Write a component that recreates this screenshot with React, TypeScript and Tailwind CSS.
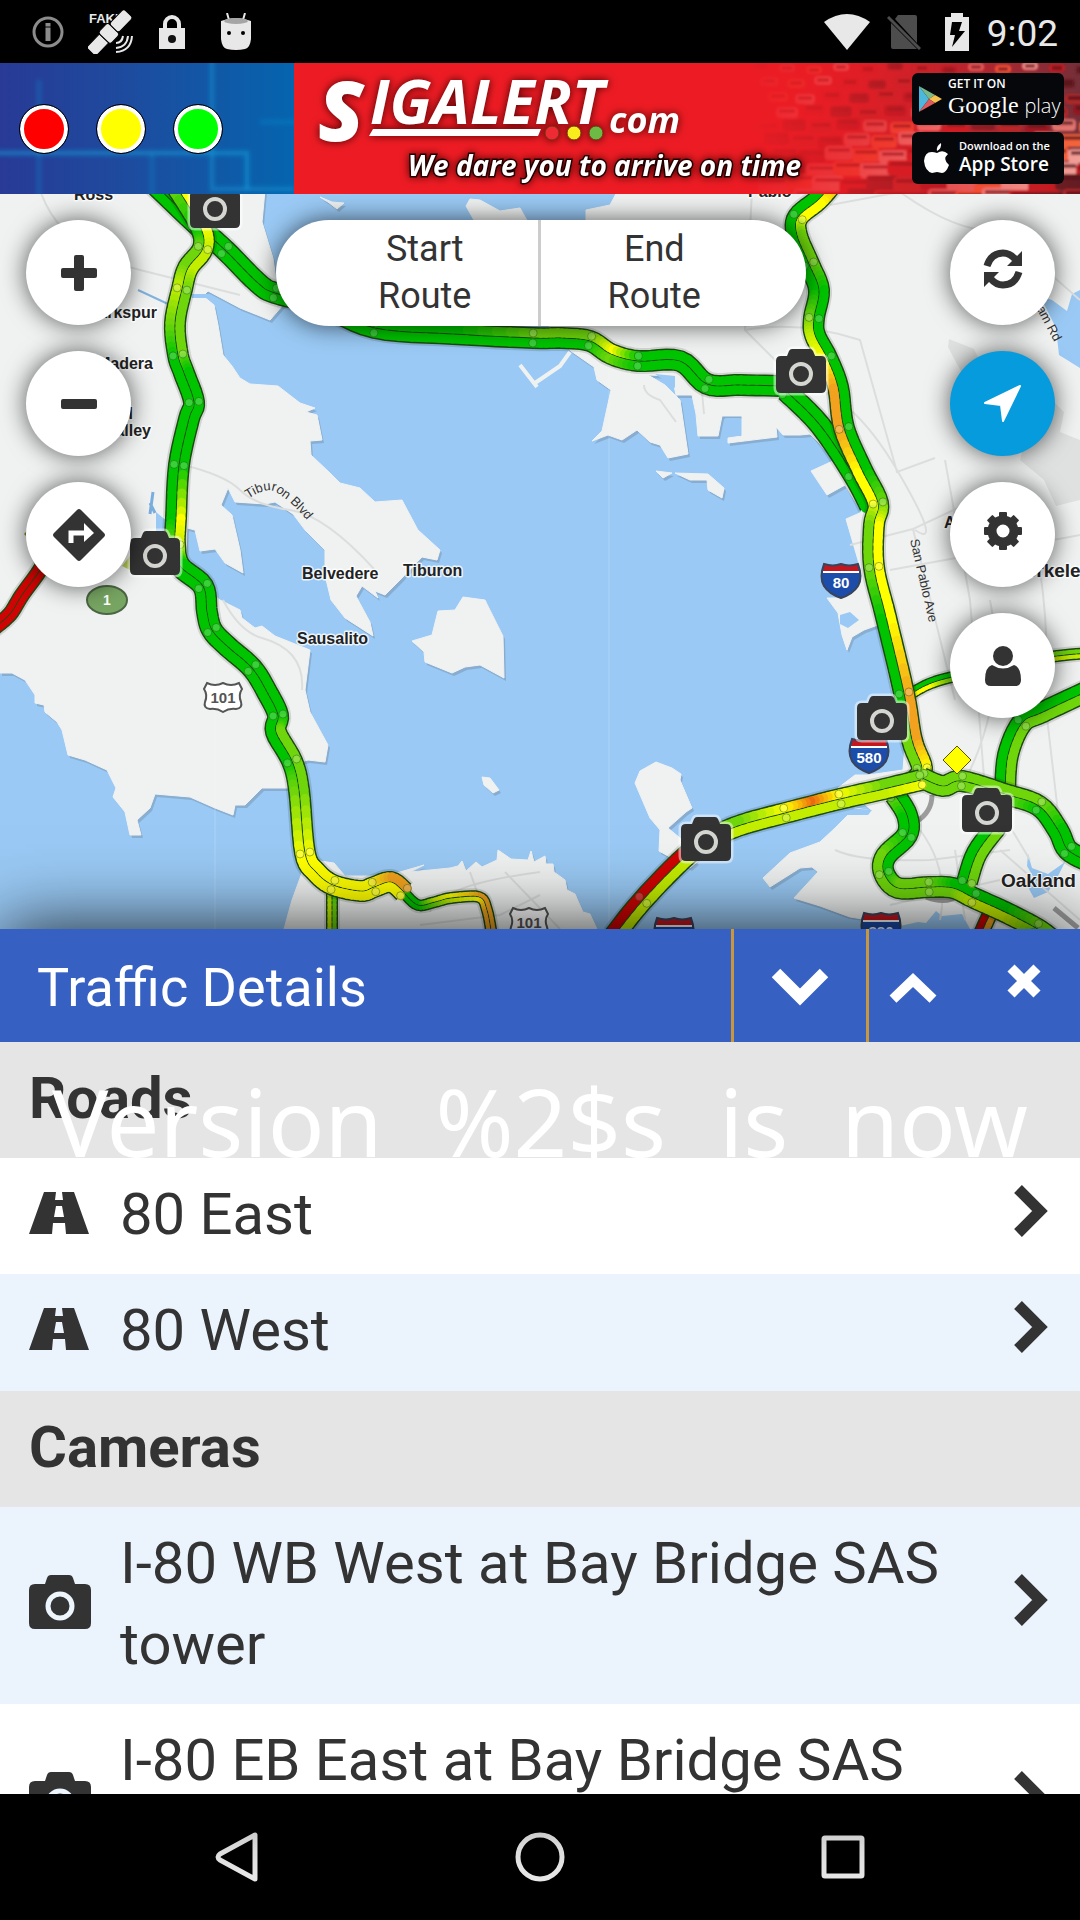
import React from "react";

type Pt = [number, number];
/* x, y, colour of the lane on the right of travel, colour of the lane on the left */
type RoadPt = [number, number, string, string];

const G = "#00c400";
const L = "#6fd60c";
const H = "#c4ee00";
const Y = "#ffff00";
const O = "#f2a21e";
const D = "#ec6a10";
const R = "#cf0404";

const hex = (c: string) => [1, 3, 5].map((i) => parseInt(c.slice(i, i + 2), 16));
const mix = (a: string, b: string, t: number) => {
  const p = hex(a);
  const q = hex(b);
  return `rgb(${p.map((v, i) => Math.round(v + (q[i] - v) * t)).join(",")})`;
};

const STEPS = 6;

function sample(points: RoadPt[]) {
  const at = (i: number) => points[Math.max(0, Math.min(points.length - 1, i))];
  const out: { x: number; y: number; a: string; b: string; node: boolean }[] = [];
  for (let i = 0; i < points.length - 1; i++) {
    const [p0, p1, p2, p3] = [at(i - 1), at(i), at(i + 1), at(i + 2)];
    for (let s = 0; s < STEPS; s++) {
      const t = s / STEPS;
      const f = (k: 0 | 1) =>
        0.5 *
        (2 * p1[k] +
          (p2[k] - p0[k]) * t +
          (2 * p0[k] - 5 * p1[k] + 4 * p2[k] - p3[k]) * t * t +
          (3 * p1[k] - p0[k] - 3 * p2[k] + p3[k]) * t * t * t);
      out.push({ x: f(0), y: f(1), a: mix(p1[2], p2[2], t), b: mix(p1[3], p2[3], t), node: s === 0 });
    }
  }
  const e = points[points.length - 1];
  out.push({ x: e[0], y: e[1], a: mix(e[2], e[2], 0), b: mix(e[3], e[3], 0), node: true });
  return out;
}

function Road({ points, w = 10 }: { points: RoadPt[]; w?: number }) {
  const s = sample(points);
  const lane = (side: number) =>
    s.map((p, i) => {
      const q = s[Math.min(i + 1, s.length - 1)];
      const o = s[Math.max(i - 1, 0)];
      const dx = q.x - o.x;
      const dy = q.y - o.y;
      const len = Math.hypot(dx, dy) || 1;
      return [p.x - (dy / len) * side * (w / 2), p.y + (dx / len) * side * (w / 2)] as Pt;
    });
  const lanes = [lane(1), lane(-1)];
  const join = (l: Pt[]) => l.map((p) => p.map((v) => v.toFixed(1)).join(",")).join(" ");
  return (
    <g fill="none" strokeLinejoin="round">
      <polyline points={join(s.map((p) => [p.x, p.y] as Pt))} stroke="#000" strokeOpacity="0.12" strokeWidth={w * 2 + 6} />
      {lanes.map((l, k) => (
        <polyline key={k} points={join(l)} stroke="#1c4a10" strokeWidth={w + 2} />
      ))}
      {lanes.map((l, k) =>
        l.slice(0, -1).map((p, i) => (
          <line
            key={`${k}-${i}`}
            x1={p[0]}
            y1={p[1]}
            x2={l[i + 1][0]}
            y2={l[i + 1][1]}
            stroke={k === 0 ? s[i].a : s[i].b}
            strokeWidth={w - 1}
            strokeLinecap="round"
          />
        ))
      )}
      {w > 7 &&
        lanes.map((l, k) =>
          l.map((p, i) =>
            s[i].node && i % (STEPS * 2) === 0 ? (
              <circle key={`${k}c${i}`} cx={p[0]} cy={p[1]} r="4" fill="#fff" fillOpacity="0.22" stroke="#1c4a10" strokeOpacity="0.4" />
            ) : null
          )
        )}
    </g>
  );
}

const roads: { w?: number; points: RoadPt[] }[] = [
  { w: 5, points: [[332, 880, L, G], [332, 905, H, L], [332, 936, H, L]] },
  { w: 5, points: [[404, 893, G, G], [418, 905, G, G], [435, 902, L, H], [451, 898, H, Y], [479, 897, Y, O], [487, 910, O, O], [492, 936, O, O]] },
  { w: 5, points: [[912, 693, Y, G], [929, 684, Y, G], [952, 677, L, G], [1010, 664, L, L], [1057, 656, H, L], [1090, 653, H, L]] },
  { w: 7, points: [[52, 548, R, R], [40, 570, R, R], [22, 595, R, R], [10, 614, R, R], [-6, 628, R, R]] },
  { w: 7, points: [[994, 905, R, O], [978, 940, R, O]] },
  {
    points: [[150, 180, G, G], [195, 223, G, G], [225, 250, G, G], [258, 283, G, G], [275, 293, G, G], [320, 305, G, G], [375, 328, G, G], [453, 334, G, G], [533, 338, G, L], [562, 338, G, L], [590, 341, G, L], [611, 354, L, Y], [638, 361, G, G], [680, 361, G, G], [707, 384, G, G], [741, 385, G, G], [785, 386, G, G]],
  },
  { points: [[786, 391, G, G], [820, 425, G, G], [853, 474, G, G], [870, 506, G, G]] },
  {
    points: [[176, 186, L, Y], [200, 226, G, Y], [203, 248, L, H], [188, 268, L, H], [182, 289, H, L], [175, 323, L, L], [178, 355, G, L], [184, 373, G, G], [194, 402, G, G], [189, 419, G, G], [179, 465, G, G], [176, 518, G, Y], [175, 545, L, H], [180, 566, G, G], [203, 586, G, G], [207, 612, G, G], [212, 630, G, G], [227, 646, G, G], [252, 668, G, G], [267, 692, G, G], [278, 715, G, G], [276, 732, G, L], [292, 761, G, L], [299, 790, L, L], [305, 853, Y, Y], [316, 872, Y, Y], [333, 885, Y, Y], [361, 891, Y, Y], [374, 887, Y, Y], [391, 882, Y, O], [404, 892, Y, O]],
  },
  {
    points: [[832, 184, G, O], [818, 200, G, Y], [798, 217, G, Y], [797, 235, G, L], [809, 264, G, L], [819, 290, G, G], [814, 318, L, G], [815, 335, H, G], [827, 358, Y, G], [838, 387, O, G], [844, 428, O, G], [862, 470, Y, G], [878, 503, Y, L], [874, 525, L, Y], [874, 567, L, Y], [886, 617, G, Y], [904, 693, G, O], [912, 740, L, O], [922, 768, L, Y], [915, 781, L, Y]],
  },
  { points: [[895, 795, L, G], [907, 815, G, G], [907, 835, G, G], [886, 856, L, G], [884, 873, L, G], [898, 888, L, L], [929, 887, L, L], [953, 888, L, G], [974, 898, H, G], [1005, 912, H, G], [1036, 928, L, L], [1050, 938, L, L]] },
  { points: [[997, 826, G, L], [977, 853, G, L], [967, 882, G, L]] },
  { points: [[1005, 793, L, G], [1008, 755, L, G], [1022, 723, L, G], [1043, 712, L, G], [1090, 690, L, G]] },
  { points: [[922, 778, L, L], [943, 786, L, L], [962, 781, L, L], [1005, 794, L, L], [1039, 806, G, L], [1058, 830, G, G], [1068, 850, G, G], [1090, 862, G, G]] },
  { points: [[921, 780, L, Y], [884, 789, L, H], [840, 799, Y, H], [812, 806, D, H], [785, 813, Y, H], [741, 825, L, H], [712, 838, L, H], [685, 857, R, H], [643, 900, R, H], [614, 936, R, H]] },
];

const land = [
  "0,190 265,190 262,222 273,258 276,280 290,300 283,305 270,320 240,308 208,291 203,296 214,305 218,325 223,355 232,366 240,378 250,384 278,386 300,403 315,408 306,412 317,415 322,440 310,441 311,455 330,473 340,483 360,488 375,502 402,500 410,515 418,530 440,550 437,560 422,557 400,580 385,595 375,591 378,598 362,586 356,596 370,622 373,636 345,618 331,600 325,575 325,550 305,530 293,514 275,502 265,504 235,502 228,488 221,505 232,515 240,550 243,573 225,563 215,549 200,551 195,530 187,528 186,556 200,585 220,600 240,610 242,618 255,628 262,626 275,636 310,650 305,690 310,712 328,745 325,762 308,760 290,765 288,788 262,788 245,805 235,805 233,815 215,808 190,797 155,794 150,808 137,820 141,835 130,835 125,812 113,797 116,788 107,770 85,760 68,755 62,730 57,722 45,712 44,705 35,703 35,695 25,680 12,673 0,673",
  "412,641 432,635 438,611 455,610 463,597 485,600 503,636 504,678 480,665 465,667 452,673 425,662 424,652",
  "482,777 490,778 499,790 493,793 484,785",
  "284,929 292,900 303,870 320,861 334,863 345,876 380,876 400,872 424,865 410,872 450,868 458,866 462,861 466,871 476,862 482,867 497,860 498,850 511,859 528,860 531,851 534,862 545,856 546,864 553,864 554,872 565,880 567,890 575,894 583,912 590,914 597,929",
  "635,783 640,771 656,762 672,768 681,774 680,780 692,808 686,812 668,828 680,838 697,862 690,868 659,851 660,830 650,818",
  "618,190 610,205 586,210 586,232 572,256 560,300 548,325 571,351 594,367 597,380 611,390 602,431 592,441 608,435 622,440 637,430 650,442 660,445 668,458 688,454 680,400 665,385 648,375 672,376 676,395 692,395 696,414 698,436 718,436 722,416 742,416 742,436 728,438 728,443 777,437 776,427 783,435 800,435 810,434 819,443 825,450 835,460 811,471 827,495 845,485 862,512 846,519 858,560 862,580 838,598 827,598 838,613 842,635 847,650 852,637 864,630 878,625 890,680 905,745 903,770 868,775 855,775 838,788 860,800 872,811 855,808 835,828 820,842 790,853 763,878 770,887 800,868 812,867 818,872 794,898 820,906 850,917 900,925 905,929 1080,929 1080,190",
  "675,473 708,474 724,488 722,498 708,490 707,480 690,480",
  "656,471 672,473 663,478",
  "466,206 470,199 480,200 500,211 520,208 528,222 475,222",
  "320,197 332,202 344,203 337,209 328,202",
];

const lakes = [
  "1080,290 1072,294 1067,311 1052,300 1040,296 1056,328 1059,355 1080,368",
  "1028,854 1032,868 1048,874 1065,862 1058,876 1048,892 1034,898 1029,889 1034,878 1027,866",
  "793,908 850,919 900,926 918,922 926,923 936,911 942,916 962,914 970,929 793,929",
  "840,615 850,612 859,620 848,628 840,624",
  "837,812 850,808 872,810 868,815 845,815",
];

const streets =
  "M40 190 Q60 250 140 270 T240 295 M183 465 Q225 475 240 490 T290 510 T375 570 M223 600 Q240 632 262 638 Q305 650 302 690 M752 190 L745 330 L800 385 Q850 390 897 470 T915 530 M850 545 L913 529 L975 500 M913 529 L955 700 M830 205 L900 192 Q960 235 1000 230 L1080 300 M745 330 Q800 320 860 340 L897 472 L935 458 M945 460 L970 600 L985 790 M890 570 L1000 550 L1080 535 M960 790 Q1010 700 990 600 M1040 570 Q1050 640 1045 700 L1060 830 M644 385 Q644 395 660 400 L676 422 M700 370 L704 414 M835 850 Q860 862 930 860 L1010 850 M920 830 Q950 870 940 920 M1000 850 L1080 920 M955 850 L965 920 M1012 830 L1030 860 M430 912 Q440 885 540 872 M470 872 L480 900 M505 872 L560 929 M540 895 L500 915 L420 925 M890 905 L1000 880";

function Camera({ x, y }: { x: number; y: number }) {
  return (
    <g transform={`translate(${x} ${y})`}>
      <path d="M-20 -15 h6 l2 -5 q1 -2 3 -2 h18 q2 0 3 2 l2 5 h6 q5 0 5 5 v27 q0 5 -5 5 h-40 q-5 0 -5 -5 v-27 q0 -5 5 -5z" fill="#333" stroke="#fff" strokeOpacity="0.5" strokeWidth="5" paintOrder="stroke" />
      <circle cx="0" cy="3" r="10" fill="none" stroke="#d3d6d1" strokeWidth="4" />
    </g>
  );
}

function Interstate({ x, y, n }: { x: number; y: number; n: string }) {
  return (
    <g transform={`translate(${x} ${y})`}>
      <path d="M-17 -16 Q-8 -13 0 -16 Q8 -13 17 -16 Q22 -3 17 6 Q12 14 0 18 Q-12 14 -17 6 Q-22 -3 -17 -16z" fill="#1c4dab" stroke="#3a4357" strokeWidth="2" />
      <path d="M-16 -15 Q-8 -12 0 -15 Q8 -12 16 -15 L18 -8 H-18z" fill="#c4161c" />
      <path d="M-18 -8 H18" stroke="#fff" strokeWidth="2" />
      <text x="0" y="8" textAnchor="middle" fontSize="15" fontWeight="700" fill="#fff">{n}</text>
    </g>
  );
}

function UsRoute({ x, y }: { x: number; y: number }) {
  return (
    <g transform={`translate(${x} ${y})`}>
      <path d="M-16 -14 Q-8 -10 0 -14 Q8 -10 16 -14 L19 -8 Q15 -2 18 5 Q20 11 13 12 Q6 11 0 15 Q-6 11 -13 12 Q-20 11 -18 5 Q-15 -2 -19 -8z" fill="#fff" stroke="#555" strokeWidth="2" />
      <text x="0" y="6" textAnchor="middle" fontSize="15" fontWeight="700" fill="#555">101</text>
    </g>
  );
}

function TrafficMap() {
  return (
    <svg viewBox="0 194 1080 735" preserveAspectRatio="xMidYMid slice" className="block h-full w-full font-['Liberation_Sans',sans-serif]" role="img" aria-label="Traffic map">
      <rect x="0" y="194" width="1080" height="735" fill="#99c9f4" />
      <g fill="#7d9cba" transform="translate(2 3)" opacity="0.6">
        {land.map((p) => <polygon key={p} points={p} />)}
      </g>
      <g fill="#f0f2f2" stroke="#f0f2f2" strokeLinejoin="round">
        {land.map((p) => <polygon key={p} points={p} />)}
        <path d="M520 365 L537 387 M535 383 L560 366 L570 352" fill="none" strokeWidth="4" />
      </g>
      <g fill="#99c9f4">
        {lakes.map((p) => <polygon key={p} points={p} />)}
        <path d="M655 374 L675 388 V376z" />
        <path d="M725 418 h16 v18 h-14z" />
      </g>
      <path d="M150 514 l3 -22 M150 503 l5 10" stroke="#7aaede" strokeWidth="3" fill="none" />
      <path d="M156 540 v-28 l12 10 v24z" fill="#99c9f4" />
      <path d="M138 290 L168 304" stroke="#82b2de" strokeWidth="2" />
      <path d="M192 296 h18" stroke="#99c9f4" strokeWidth="4" />
      <path d="M949 339 l25 10 l12 24 l-18 10 q-12 -20 -20 -36z M1052 400 l12 12 l-4 20 l20 8 v60 l-24 6 l-12 -26 l-24 -20 l10 -40z" fill="#dfe1e1" />
      <path d={streets} fill="none" stroke="#dcdede" strokeWidth="2" />
      <path d="M932 795 Q932 812 916 822 M926 897 q20 8 34 -2 M1054 908 l24 20" fill="none" stroke="#9c9c9c" strokeWidth="5" />
      <path d="M609 360 V929 M215 640 V929" stroke="#fff" strokeOpacity="0.2" />
      <g fontSize="16" fontWeight="700" fill="#222" stroke="#fff" strokeWidth="3" paintOrder="stroke" strokeLinejoin="round" strokeOpacity="0.8">
        <text x="74" y="200">Ross</text>
        <text x="157" y="318" textAnchor="end">Larkspur</text>
        <text x="153" y="369" textAnchor="end">Madera</text>
        <text x="133" y="419" textAnchor="end">Mill</text>
        <text x="151" y="436" textAnchor="end">Valley</text>
        <text x="302" y="579">Belvedere</text>
        <text x="403" y="576">Tiburon</text>
        <text x="297" y="644">Sausalito</text>
        <text x="748" y="197">Pablo</text>
        <text x="944" y="528">Albany</text>
        <text x="1012" y="577" fontSize="19">Berkeley</text>
      </g>
      <g fontSize="13" fill="#333">
        <path id="tiburon" d="M248 499 Q270 484 280 495 Q292 502 310 524" fill="none" />
        <text><textPath href="#tiburon">Tiburon Blvd</textPath></text>
        <text transform="translate(910 540) rotate(77)">San Pablo Ave</text>
        <text transform="translate(1033 302) rotate(62)">ham Rd</text>
      </g>
      <path d="M24 534 l12 -12 v24z" fill="#8a8420" />
      <path d="M122 566 l8 -10 v14z" fill="#b9cf55" />
      {roads.map((r, i) => <Road key={i} points={r.points} w={r.w} />)}
      <ellipse cx="107" cy="600" rx="20" ry="14" fill="#77a562" stroke="#4b6644" strokeWidth="2" />
      <text x="107" y="605" textAnchor="middle" fontSize="14" fontWeight="700" fill="#fff">1</text>
      <UsRoute x={223} y={697} />
      <UsRoute x={529} y={922} />
      <Interstate x={841} y={580} n="80" />
      <Interstate x={869} y={755} n="580" />
      <Interstate x={881} y={929} n="880" />
      <Interstate x={674} y={934} n="80" />
      <path d="M957 746 l14 14 l-14 14 l-14 -14z" fill="#ffff00" stroke="#5c5400" strokeWidth="1" />
      <Camera x={215} y={206} />
      <Camera x={155} y={553} />
      <Camera x={801} y={371} />
      <Camera x={882} y={718} />
      <Camera x={987} y={810} />
      <Camera x={706} y={839} />
      <text x="1001" y="887" fontSize="19" fontWeight="700" fill="#222" stroke="#fff" strokeWidth="2" paintOrder="stroke">Oakland</text>
    </svg>
  );
}

function StatusBar() {
  return (
    <header className="flex h-[63px] shrink-0 items-center bg-black pr-[22px] pl-8">
      <div className="flex flex-1 items-center gap-6">
        <svg viewBox="0 0 32 32" className="size-8" aria-hidden="true">
          <circle cx="16" cy="16" r="14" fill="none" stroke="#8c8c8c" strokeWidth="3" />
          <path d="M16 7 v18" stroke="#8c8c8c" strokeWidth="5" />
          <path d="M13 11 h6" stroke="#000" strokeWidth="1" />
        </svg>
        <svg viewBox="0 0 44 44" className="h-11 w-[46px] font-['Liberation_Sans',sans-serif]" aria-label="Fake location">
          <text x="0" y="13" fontSize="13" fontWeight="700" fill="#e8e8e8">FAKE</text>
          <g transform="rotate(-46 21 23)" fill="#e8e8e8" stroke="#000" strokeWidth="1">
            <rect x="-6" y="16" width="19" height="13" rx="1" />
            <rect x="13" y="14" width="14" height="17" rx="3" />
            <rect x="27" y="16" width="21" height="13" rx="3" />
          </g>
          <path d="M27 33 q6 0 7 -7 M27 38 q11 -1 12 -12 M27 42 q15 -1 16 -16" fill="none" stroke="#e8e8e8" strokeWidth="2" />
        </svg>
        <svg viewBox="0 0 28 36" className="h-9 w-7" aria-hidden="true">
          <path d="M7 16 v-6 a7 7 0 0 1 14 0 v6" fill="none" stroke="#e8e8e8" strokeWidth="4" />
          <path d="M1 14 h26 v21 h-26z" fill="#e8e8e8" />
          <circle cx="14" cy="25" r="4" fill="#111" />
        </svg>
        <svg viewBox="0 0 32 38" className="ml-[10px] h-[38px] w-8" aria-hidden="true">
          <path d="M7 0 l2 7 M25 0 l-2 7" stroke="#e8e8e8" strokeWidth="2" />
          <path d="M1 8 q15 -6 30 0 v18 q-1 9 -6 10 q-9 2 -18 0 q-5 -1 -6 -10z" fill="#e8e8e8" />
          <ellipse cx="16" cy="8" rx="12" ry="3" fill="#a5a5a5" />
          <circle cx="9" cy="20" r="2" fill="#000" />
          <circle cx="23" cy="20" r="2" fill="#000" />
        </svg>
      </div>
      <div className="flex items-center">
        <svg viewBox="0 0 46 36" className="h-9 w-[46px]" aria-hidden="true">
          <path d="M0 8 Q23 -8 46 8 L23 36z" fill="#e8e8e8" />
        </svg>
        <svg viewBox="0 0 34 36" className="ml-[17px] h-9 w-[34px]" aria-hidden="true">
          <path d="M11 1 h17 q2 0 2 2 v26 L8 5z M4 9 L30 35 h-24 q-2 0 -2 -2z" fill="#4d4d4d" />
          <path d="M1 3 L33 35" stroke="#4d4d4d" strokeWidth="3" />
        </svg>
        <svg viewBox="0 0 24 38" className="ml-6 h-[38px] w-6" aria-hidden="true">
          <path d="M6 0 h12 v4 h6 v34 h-24 v-34 h6z" fill="#e8e8e8" />
          <path d="M7 9 h10 l-3 9 h6 L7 34 l3 -12 h-5z" fill="#000" />
        </svg>
        <time className="ml-[18px] pt-1 font-['Roboto',sans-serif] text-[37px] leading-10 text-[#e8e8e8]">9:02</time>
      </div>
    </header>
  );
}

const lights = ["bg-[#ff0000]", "bg-[#ffff00]", "bg-[#00ff00]"];

function Banner() {
  const cars = Array.from({ length: 130 }, (_, i) => {
    const row = Math.floor(i / 13);
    return {
      x: 752 + ((i % 13) * 27 + ((row * 37) % 29)),
      y: 62 + row * 14 + ((i * 7) % 5),
      w: 16 + row * 2,
      c: ["#8e1720", "#f0a59c", "#a62a2a", "#f3683c", "#5c1a20", "#e07c74", "#bb1c22"][(i * 5 + row * 3) % 7],
    };
  });
  return (
    <div className="relative h-[131px] shrink-0 overflow-hidden bg-[#ed1c24]">
      <svg viewBox="0 63 1080 131" preserveAspectRatio="none" className="absolute inset-0 h-full w-full" aria-hidden="true">
        <defs>
          <linearGradient id="blue" x1="0" x2="1">
            <stop offset="0" stopColor="#283a96" />
            <stop offset="0.45" stopColor="#1d4c9f" />
            <stop offset="1" stopColor="#0564ae" />
          </linearGradient>
          <linearGradient id="fade" x1="0" x2="1">
            <stop offset="0" stopColor="#ed1c24" />
            <stop offset="0.35" stopColor="#ed1c24" stopOpacity="0.7" />
            <stop offset="1" stopColor="#ed1c24" stopOpacity="0.05" />
          </linearGradient>
          <linearGradient id="dusk" x1="0" x2="1">
            <stop offset="0" stopColor="#ed1c24" />
            <stop offset="1" stopColor="#6d303a" />
          </linearGradient>
          <filter id="glow" filterUnits="userSpaceOnUse" x="-20" y="43" width="340" height="180"><feGaussianBlur stdDeviation="2" /></filter>
          <filter id="soft"><feGaussianBlur stdDeviation="1" /></filter>
        </defs>
        <rect x="0" y="63" width="294" height="131" fill="url(#blue)" />
        <g filter="url(#glow)" fill="none" stroke="#11a0dc" strokeWidth="5">
          <path d="M-10 153 H247 V190" strokeOpacity="0.5" />
          <path d="M212 50 V189 H294" strokeOpacity="0.4" />
          <path d="M39 80 V222" strokeOpacity="0.25" />
          <path d="M260 205 H300 M260 122 H300 M152 153 V200" strokeOpacity="0.25" />
        </g>
        <rect x="294" y="63" width="786" height="131" fill="#ed1c24" />
        <rect x="740" y="63" width="340" height="131" fill="url(#dusk)" />
        <g filter="url(#soft)">
          {cars.map((c, i) => (
            <g key={i}>
              <rect x={c.x} y={c.y} width={c.w} height={c.w / 2} rx="4" fill={c.c} />
              <rect x={c.x + 3} y={c.y + 2} width={c.w - 6} height="4" fill="#451219" opacity="0.7" />
            </g>
          ))}
        </g>
        <rect x="740" y="63" width="340" height="131" fill="url(#fade)" />
      </svg>
      <div className="relative flex h-full items-center">
        <div className="flex gap-[29px] pl-5">
          {lights.map((c) => (
            <span key={c} className={`size-12 rounded-full border-4 border-white outline-1 outline-black ${c}`} />
          ))}
        </div>
        <svg viewBox="294 63 540 131" className="ml-[72px] h-[131px] w-[540px] font-['Open_Sans','Noto_Sans',sans-serif] [filter:drop-shadow(0_0_4px_#400)]" role="img" aria-label="Sigalert.com">
          <g fill="#fff" fontWeight="700" fontStyle="italic">
            <text x="318" y="141" fontSize="84" fontWeight="800">S</text>
            <text x="370" y="124" fontSize="61">IGALERT</text>
            <path d="M373 129 H541 L538 136 H369z" />
            <text x="609" y="133" fontSize="36">com</text>
            <text x="408" y="176" fontSize="28" stroke="#200" strokeWidth="3" paintOrder="stroke">We dare you to arrive on time</text>
          </g>
          <g stroke="#731" strokeWidth="1">
            <circle cx="552" cy="133" r="7" fill="#ee2b34" />
            <circle cx="574" cy="133" r="7" fill="#f8ec1c" />
            <circle cx="596" cy="133" r="7" fill="#6cbb45" />
          </g>
        </svg>
        <div className="mr-4 ml-auto flex w-[152px] flex-col gap-[7px] text-white">
          <a href="#google-play" className="flex h-[52px] items-center gap-[6px] rounded-md bg-[#05070a] pl-[6px]">
            <svg viewBox="0 0 24 26" className="h-[26px] w-6 shrink-0" aria-hidden="true">
              <path d="M1 0 L11 13 L1 26z" fill="#4db8dd" />
              <path d="M1 0 L17 9 L11 13z" fill="#7ab98b" />
              <path d="M17 9 L24 13 L17 17 L11 13z" fill="#f4c04e" />
              <path d="M1 26 L11 13 L17 17z" fill="#df5a5d" />
            </svg>
            <span className="flex flex-col">
              <span className="font-['Open_Sans',sans-serif] text-[12px] leading-3 font-semibold">GET IT ON</span>
              <span className="font-['Open_Sans',sans-serif] text-[22px] leading-7 whitespace-nowrap"><span className="font-['Liberation_Serif',serif] text-[24px]">Google</span> <span className="text-[20px] font-light">play</span></span>
            </span>
          </a>
          <a href="#app-store" className="flex h-[52px] items-center gap-[10px] rounded-md bg-[#05070a] pl-3">
            <svg viewBox="0 0 25 30" className="h-[30px] w-[25px] shrink-0" aria-hidden="true">
              <path d="M17 0 q1 5 -4 8 q-1 -5 4 -8z M13 10 q6 -4 11 1 q-6 5 1 11 q-3 8 -7 8 l-5 -1 l-5 1 Q1 28 0 18 Q1 6 13 10z" fill="#fff" />
            </svg>
            <span className="flex flex-col font-['Open_Sans',sans-serif] font-semibold">
              <span className="text-[11px] leading-3 whitespace-nowrap">Download on the</span>
              <span className="text-[19px] leading-6 whitespace-nowrap">App Store</span>
            </span>
          </a>
        </div>
      </div>
    </div>
  );
}

function RoundButton({ label, blue, children }: { label: string; blue?: boolean; children: React.ReactNode }) {
  return (
    <button
      type="button"
      aria-label={label}
      className={`flex size-[105px] items-center justify-center rounded-full shadow-[0_0_24px_rgba(0,0,0,0.65)] ${blue ? "bg-[#069bdd]" : "bg-white"}`}
    >
      {children}
    </button>
  );
}

function MapControls() {
  const teeth = [0, 45, 90, 135, 180, 225, 270, 315];
  return (
    <div className="absolute inset-0 flex items-start justify-between px-[25px] pt-[26px] pl-[26px]">
      <div className="flex flex-col gap-[26px]">
        <RoundButton label="Zoom in">
          <svg viewBox="0 0 36 36" className="size-9"><rect y="13" width="36" height="10" rx="2" fill="#333" /><rect x="13" width="10" height="36" rx="2" fill="#333" /></svg>
        </RoundButton>
        <RoundButton label="Zoom out">
          <svg viewBox="0 0 36 36" className="size-9"><rect y="13" width="36" height="10" rx="2" fill="#333" /></svg>
        </RoundButton>
        <RoundButton label="Directions">
          <svg viewBox="0 0 52 52" className="size-[52px]">
            <path d="M24 1 q2 -2 4 0 L51 24 q2 2 0 4 L28 51 q-2 2 -4 0 L1 28 q-2 -2 0 -4z" fill="#333" />
            <path d="M18 34 V24 H34" fill="none" stroke="#fff" strokeWidth="5" />
            <path d="M31 14 L41 24 L31 33z" fill="#fff" />
          </svg>
        </RoundButton>
      </div>
      <div className="flex h-[106px] w-[530px] overflow-hidden rounded-full bg-white font-['Roboto',sans-serif] text-[36px] leading-[47px] text-[#333] shadow-[0_0_24px_rgba(0,0,0,0.65)]">
        <button type="button" className="flex-1 border-r-3 border-[#ccc] pl-[36px]">Start<br />Route</button>
        <button type="button" className="flex-1 pr-[38px]">End<br />Route</button>
      </div>
      <div className="flex flex-col gap-[26px]">
        <RoundButton label="Refresh">
          <svg viewBox="0 0 40 40" className="mb-2 size-10">
            <path d="M4 17 Q8 4 20 4 Q27 4 32 10 M36 23 Q32 36 20 36 Q13 36 8 30" fill="none" stroke="#333" strokeWidth="7" />
            <path d="M39 2 V17 H24z M1 38 V23 H16z" fill="#333" />
          </svg>
        </RoundButton>
        <RoundButton label="My location" blue>
          <svg viewBox="0 0 38 38" className="size-[38px]"><path d="M36 1 L19 36 L17 20 L1 18z" fill="#fff" stroke="#fff" strokeWidth="2" strokeLinejoin="round" /></svg>
        </RoundButton>
        <RoundButton label="Settings">
          <svg viewBox="-20 -20 40 40" className="mb-2 size-10">
            {teeth.map((a) => (
              <rect key={a} x="-4" y="-19" width="8" height="12" rx="1" fill="#333" transform={`rotate(${a})`} />
            ))}
            <circle r="11" fill="none" stroke="#333" strokeWidth="9" />
          </svg>
        </RoundButton>
        <RoundButton label="Account">
          <svg viewBox="0 0 36 40" className="size-10"><circle cx="18" cy="10" r="10" fill="#333" /><path d="M7 19 Q18 26 29 19 Q36 21 36 34 Q36 40 30 40 H6 Q0 40 0 34 Q0 21 7 19z" fill="#333" /></svg>
        </RoundButton>
      </div>
    </div>
  );
}

function RoadIcon() {
  return (
    <svg viewBox="0 0 60 42" className="h-[42px] w-[60px]" aria-hidden="true">
      <path d="M15 0 H27 L26 8 H34 L33 0 H45 L60 42 H37 L36 31 H24 L23 42 H0z M27 14 L25 25 H35 L33 14z" fill="#333" fillRule="evenodd" />
    </svg>
  );
}

function CameraIcon() {
  return (
    <svg viewBox="0 0 62 54" className="h-[54px] w-[62px]" aria-hidden="true">
      <path d="M6 9 h10 l2 -6 q1 -3 4 -3 h18 q3 0 4 3 l2 6 h10 q6 0 6 6 v33 q0 6 -6 6 h-50 q-6 0 -6 -6 v-33 q0 -6 6 -6z" fill="#333" />
      <circle cx="31" cy="31" r="12" fill="none" stroke="#edf5fd" strokeWidth="5" />
    </svg>
  );
}

function Row({ text, shade, camera }: { text: string; shade?: boolean; camera?: boolean }) {
  return (
    <li className={shade ? "bg-[#ebf4fd]" : "bg-white"}>
      <a href="#details" className="flex items-center pt-4 pr-8 pb-[19px] pl-[29px] text-[58px] leading-[81px]">
        <span className="mb-1 flex w-[91px] shrink-0">{camera ? <CameraIcon /> : <RoadIcon />}</span>
        <span className="flex-1">{text}</span>
        <svg viewBox="0 0 34 52" className="mb-2 ml-14 h-[52px] w-[34px] shrink-0" aria-hidden="true">
          <path d="M4 4 L26 26 L4 48" fill="none" stroke="#333" strokeWidth="11" />
        </svg>
      </a>
    </li>
  );
}

function Panel() {
  return (
    <section className="relative flex min-h-0 flex-1 flex-col bg-white font-['Roboto',sans-serif] text-[#333] shadow-[0_0_70px_rgba(0,0,0,0.85)]">
      <div className="flex h-[113px] shrink-0 items-stretch bg-[#3660c2] text-white">
        <h1 className="flex-1 pl-[37px] text-[54px] leading-[117px]">Traffic Details</h1>
        <button type="button" aria-label="Collapse" className="flex w-[135px] items-center justify-center border-l-3 border-[#c8963c]">
          <svg viewBox="0 0 58 36" className="size-[58px]"><path d="M5 5 L29 29 L53 5" fill="none" stroke="#fff" strokeWidth="12" /></svg>
        </button>
        <button type="button" aria-label="Expand" className="flex w-[90px] items-center justify-center border-l-3 border-[#c8963c]">
          <svg viewBox="0 0 48 30" className="mt-1 size-12"><path d="M4 26 L24 7 L44 26" fill="none" stroke="#fff" strokeWidth="10" /></svg>
        </button>
        <button type="button" aria-label="Close" className="flex w-[124px] items-center justify-center pb-[9px] pl-3">
          <svg viewBox="0 0 34 34" className="size-[34px]"><path d="M4 4 L30 30 M30 4 L4 30" stroke="#fff" strokeWidth="10" /></svg>
        </button>
      </div>
      <div className="min-h-0 flex-1 overflow-hidden">
        <h2 className="bg-[#e5e5e5] pt-4 pb-[19px] pl-[29px] text-[58px] leading-[81px] font-bold">Roads</h2>
        <ul className="bg-[#ebf4fd] pb-px">
          <Row text="80 East" />
          <Row text="80 West" shade />
        </ul>
        <h2 className="bg-[#e5e5e5] pt-4 pb-[19px] pl-[29px] text-[58px] leading-[81px] font-bold">Cameras</h2>
        <ul>
          <Row text="I-80 WB West at Bay Bridge SAS tower" shade camera />
          <Row text="I-80 EB East at Bay Bridge SAS tower" camera />
        </ul>
      </div>
      <p className="pointer-events-none absolute inset-x-0 top-[128px] flex justify-between px-[52px] font-['Noto_Sans',sans-serif] text-[94px] leading-[128px] text-white">
        <span>Version</span> <span>%2$s</span> <span>is</span> <span>now</span>
      </p>
    </section>
  );
}

function NavBar() {
  return (
    <nav className="flex h-[126px] shrink-0 items-center justify-between bg-black px-[212px]">
      <button type="button" aria-label="Back">
        <svg viewBox="0 0 50 52" className="h-[52px] w-[50px]"><path d="M43 4 V48 L8 29 Q4 26 8 23z" fill="none" stroke="#e8e8e8" strokeWidth="5" strokeLinejoin="round" /></svg>
      </button>
      <button type="button" aria-label="Home">
        <svg viewBox="0 0 50 50" className="size-[50px]"><circle cx="25" cy="25" r="22" fill="none" stroke="#e8e8e8" strokeWidth="5" /></svg>
      </button>
      <button type="button" aria-label="Recent apps">
        <svg viewBox="0 0 50 50" className="size-[50px]"><rect x="6" y="6" width="38" height="38" rx="1" fill="none" stroke="#e8e8e8" strokeWidth="5" /></svg>
      </button>
    </nav>
  );
}

export default function App() {
  return (
    <div className="flex h-screen flex-col overflow-hidden bg-white">
      <StatusBar />
      <Banner />
      <main className="flex min-h-0 flex-1 flex-col">
        <div className="relative h-[735px] shrink-0 overflow-hidden">
          <TrafficMap />
          <MapControls />
        </div>
        <Panel />
      </main>
      <NavBar />
    </div>
  );
}
